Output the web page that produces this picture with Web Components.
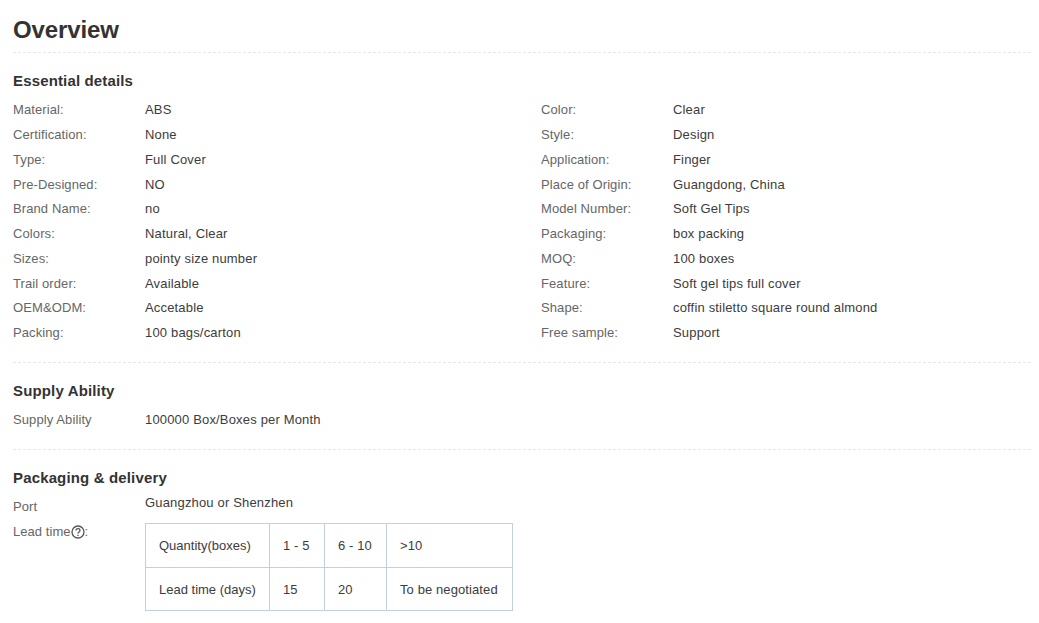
<!DOCTYPE html>
<html>
<head>
<meta charset="utf-8">
<title>Overview</title>
<style>
    html, body { margin: 0; background: #fff; }
</style>
</head>
<body>
<product-overview>
    <detail-section heading="Essential details" first>
        <detail-grid>
            <detail-row label="Material:">ABS</detail-row>
            <detail-row label="Color:">Clear</detail-row>
            <detail-row label="Certification:">None</detail-row>
            <detail-row label="Style:">Design</detail-row>
            <detail-row label="Type:">Full Cover</detail-row>
            <detail-row label="Application:">Finger</detail-row>
            <detail-row label="Pre-Designed:">NO</detail-row>
            <detail-row label="Place of Origin:">Guangdong, China</detail-row>
            <detail-row label="Brand Name:">no</detail-row>
            <detail-row label="Model Number:">Soft Gel Tips</detail-row>
            <detail-row label="Colors:">Natural, Clear</detail-row>
            <detail-row label="Packaging:">box packing</detail-row>
            <detail-row label="Sizes:">pointy size number</detail-row>
            <detail-row label="MOQ:">100 boxes</detail-row>
            <detail-row label="Trail order:">Available</detail-row>
            <detail-row label="Feature:">Soft gel tips full cover</detail-row>
            <detail-row label="OEM&amp;ODM:">Accetable</detail-row>
            <detail-row label="Shape:">coffin stiletto square round almond</detail-row>
            <detail-row label="Packing:">100 bags/carton</detail-row>
            <detail-row label="Free sample:">Support</detail-row>
        </detail-grid>
    </detail-section>
    <detail-section heading="Supply Ability">
        <detail-row label="Supply Ability">100000 Box/Boxes per Month</detail-row>
    </detail-section>
    <detail-section heading="Packaging &amp; delivery" last>
        <detail-row label="Port" raised>Guangzhou or Shenzhen</detail-row>
        <lead-time></lead-time>
    </detail-section>
</product-overview>

<script>
    class ProductOverview extends HTMLElement {
        constructor() {
            super();
            this.attachShadow({ mode: "open" });
            this.shadowRoot.innerHTML = `
                <style>
                    :host {
                        display: block;
                        padding: 0 8px 0 13px;
                        color: #3c3c3c;
                        font: 13px/15px "Liberation Sans", Arial, sans-serif;
                    }
                    h1 {
                        margin: 0;
                        height: 53px;
                        box-sizing: border-box;
                        padding-top: 16px;
                        font-size: 24px;
                        line-height: 28px;
                        font-weight: bold;
                        letter-spacing: -0.1px;
                        color: #333;
                        border-bottom: 1px dashed #e4e8ea;
                    }
                </style>
                <h1>Overview</h1>
                <slot></slot>`;
        }
    }

    class DetailSection extends HTMLElement {
        constructor() {
            super();
            this.attachShadow({ mode: "open" });
            this.shadowRoot.innerHTML = `
                <style>
                    :host {
                        display: block;
                        padding-top: 19px;
                        padding-bottom: 12.25px;
                        border-bottom: 1px dashed #e4e8ea;
                    }
                    :host([first]) { padding-bottom: 12px; }
                    :host([last]) { border-bottom: 0; }
                    h2 {
                        margin: 0 0 13.25px;
                        font-size: 15px;
                        line-height: 17px;
                        font-weight: bold;
                        letter-spacing: 0.15px;
                        color: #333;
                    }
                </style>
                <h2></h2>
                <slot></slot>`;
            this.shadowRoot.querySelector("h2").textContent = this.getAttribute("heading");
        }
    }

    class DetailGrid extends HTMLElement {
        constructor() {
            super();
            this.attachShadow({ mode: "open" });
            this.shadowRoot.innerHTML = `
                <style>
                    :host {
                        display: grid;
                        grid-template-columns: 528px 1fr;
                    }
                </style>
                <slot></slot>`;
        }
    }

    class DetailRow extends HTMLElement {
        constructor() {
            super();
            this.attachShadow({ mode: "open" });
            this.shadowRoot.innerHTML = `
                <style>
                    :host {
                        display: flex;
                        height: 24.75px;
                        align-items: flex-start;
                    }
                    .label { width: 132px; flex: none; color: #666; letter-spacing: 0.1px; }
                    .value { letter-spacing: 0.17px; }
                    :host([raised]) .value { margin-top: -4px; }
                </style>
                <div class="label"></div>
                <div class="value"><slot></slot></div>`;
            this.shadowRoot.querySelector(".label").textContent = this.getAttribute("label");
        }
    }

    class LeadTime extends HTMLElement {
        constructor() {
            super();
            this.attachShadow({ mode: "open" });
            this.shadowRoot.innerHTML = `
                <style>
                    :host { display: flex; align-items: flex-start; margin-top: -1px; }
                    .label {
                        width: 132px;
                        flex: none;
                        margin-top: 1px;
                        color: #666;
                        letter-spacing: 0.05px;
                        display: flex;
                        align-items: center;
                    }
                    svg { display: block; margin-top: 1px; }
                    table { border-collapse: collapse; table-layout: fixed; width: 367px; letter-spacing: 0.1px; }
                    td {
                        border: 1px solid #c4cfdd;
                        height: 44px;
                        padding: 0 0 0 13px;
                        box-sizing: border-box;
                        white-space: nowrap;
                    }
                    tr:last-child td { height: 43px; }
                    td:nth-child(1) { width: 124px; letter-spacing: 0; }
                    td:nth-child(2) { width: 55px; }
                    td:nth-child(3) { width: 62px; }
                    td:nth-child(4) { width: 126px; }
                </style>
                <div class="label">Lead time<svg width="14" height="14" viewBox="0 0 14 14" fill="none" stroke="#555" stroke-width="1.3"><circle cx="7" cy="7" r="6"/><path d="M5 5.6c0-1.2.9-1.9 2-1.9s2 .7 2 1.8c0 1.500-2 1.500-2 3"/><path d="M7 9.700v1.300"/></svg>:</div>
                <table>
                    <tr><td>Quantity(boxes)</td><td>1 - 5</td><td>6 - 10</td><td>&gt;10</td></tr>
                    <tr><td>Lead time (days)</td><td>15</td><td>20</td><td>To be negotiated</td></tr>
                </table>`;
        }
    }

    customElements.define("product-overview", ProductOverview);
    customElements.define("detail-section", DetailSection);
    customElements.define("detail-grid", DetailGrid);
    customElements.define("detail-row", DetailRow);
    customElements.define("lead-time", LeadTime);
</script>
</body>
</html>
